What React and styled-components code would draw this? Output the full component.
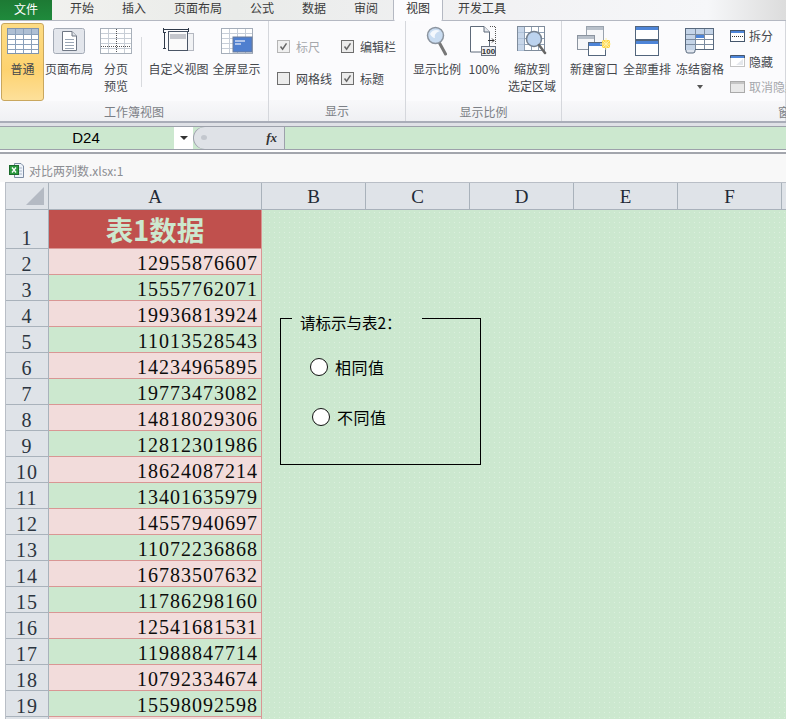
import React from 'react';
import styled, { createGlobalStyle } from 'styled-components';

const CJK = '"Noto Sans CJK SC", "Liberation Sans", sans-serif';
const SERIF = '"Liberation Serif", "Noto Sans CJK SC", serif';
const GREEN = '#cce8cf';
const DOTS = 'radial-gradient(circle, rgba(255,255,255,.32) .7px, transparent .8px)';

const GlobalStyle = createGlobalStyle`
  html, body { margin: 0; padding: 0; background: #fff; overflow: hidden; }
  body { width: 786px; height: 719px; font-family: ${CJK}; }
`;

const Page = styled.div`
  width: 786px;
  height: 719px;
  overflow: hidden;
  display: flex;
  flex-direction: column;
`;

/* tabs */
const TabBar = styled.div`
  height: 20px;
  display: flex;
  flex: none;
  background: linear-gradient(90deg, #f3f3f0 0%, #e9ebe9 30%, #f1f1f3 60%, #f6f7f9 90%, #dcdcdc 100%);
  border-bottom: 1px solid #b4b8c2;
`;
const FileTab = styled.div`
  width: 52px;
  background: linear-gradient(#1d7a34, #1f8a3c);
  color: #fff;
  font-size: 12px;
  line-height: 18px;
  text-align: center;
`;
const Tab = styled.div`
  width: ${p => p.$w}px;
  margin-left: ${p => p.$ml || 0}px;
  font-size: 12px;
  line-height: 15px;
  text-align: center;
  color: #3b3b3b;
  box-sizing: border-box;
  ${p => p.$active && `
    height: 21px;
    background: #fcfcfe;
    border-left: 1px solid #b4b8c2;
    border-right: 1px solid #b4b8c2;
    border-radius: 0 0 2px 2px;
    position: relative;
    color: #333;
  `}
`;

/* ribbon */
const Ribbon = styled.div`
  height: 100px;
  flex: none;
  display: flex;
  background: #fbfbfd;
  border-bottom: 2px solid #a9adb8;
  overflow: hidden;
`;
const Group = styled.div`
  width: ${p => p.$w}px;
  flex: none;
  display: flex;
  flex-direction: column;
  box-sizing: border-box;
  border-right: 1px solid #d5d7dc;
`;
const GroupBody = styled.div`
  height: 80px;
  display: flex;
  align-items: flex-start;
  padding-top: 2px;
  padding-left: ${p => p.$pl || 0}px;
  box-sizing: border-box;
`;
const GroupLabel = styled.div`
  flex: 1;
  font-size: 12px;
  line-height: 21px;
  text-align: ${p => p.$align || 'center'};
  padding-left: ${p => p.$pl || 0}px;
  white-space: nowrap;
  color: #7b7f86;
  background: linear-gradient(#f8f8fa, #eff0f3);
`;
const BigButton = styled.div`
  width: ${p => p.$w}px;
  margin-left: ${p => p.$ml || 0}px;
  height: 78px;
  flex: none;
  display: flex;
  flex-direction: column;
  align-items: center;
  box-sizing: border-box;
  padding-top: 3px;
  border-radius: 3px;
  ${p => p.$on && `
    background: linear-gradient(#fddc85, #fdd26f 60%, #fde09a);
    border: 1px solid #c9a75e;
    padding-top: 2px;
  `}
`;
const IconSlot = styled.div`
  height: 30px;
  display: flex;
  align-items: center;
  justify-content: center;
  svg { display: block; }
`;
const BigText = styled.div`
  margin-top: 4px;
  font-size: 12px;
  line-height: 17px;
  text-align: center;
  white-space: nowrap;
  color: #44474c;
`;
const Arrow = styled.div`
  width: 0;
  height: 0;
  margin-top: 8px;
  border: 3px solid transparent;
  border-top: 4px solid #555;
`;
const Separator = styled.div`
  width: 1px;
  height: 50px;
  margin: 14px 5px 0 3px;
  background: #d8dade;
  flex: none;
`;
const CheckGrid = styled.div`
  display: grid;
  grid-template-columns: 64px 64px;
  grid-auto-rows: 32px;
  padding-top: 7px;
`;
const CheckRow = styled.div`
  display: flex;
  align-items: center;
  gap: 6px;
  font-size: 12px;
  color: ${p => (p.$off ? '#a6a8ac' : '#44474c')};
`;
const CheckBox = styled.span`
  width: 11px;
  height: 11px;
  flex: none;
  border: 1px solid ${p => (p.$off ? '#b5b5b5' : '#6e6e6e')};
  background: ${p => (p.$off ? '#f0f0f0' : '#ececec')};
  display: flex;
  svg { display: block; }
`;
const SmallList = styled.div`
  display: flex;
  flex-direction: column;
  padding-top: 0;
  margin-left: 6px;
`;
const SmallRow = styled.div`
  height: 25.5px;
  display: flex;
  align-items: center;
  gap: 4px;
  font-size: 12px;
  white-space: nowrap;
  color: ${p => (p.$off ? '#a6a8ac' : '#44474c')};
  svg { display: block; flex: none; }
`;

/* formula bar */
const Gutter = styled.div`
  height: 3px;
  flex: none;
  background: #dfe1e6;
`;
const FormulaBar = styled.div`
  height: 22px;
  flex: none;
  display: flex;
  border-top: 1px solid #9da1ab;
  border-bottom: 1px solid #9da1ab;
  background-color: ${GREEN};
`;
const NameBox = styled.div`
  width: 174px;
  font-family: "Liberation Sans", sans-serif;
  font-size: 15px;
  line-height: 22px;
  text-align: center;
  color: #000;
  padding-right: 2px;
  box-sizing: border-box;
`;
const NameDrop = styled.div`
  width: 19px;
  background: #fff;
  display: flex;
  align-items: center;
  justify-content: center;
  &::after {
    content: '';
    margin-top: 3px;
    border: 4px solid transparent;
    border-top: 4px solid #333;
  }
`;
const FxPanel = styled.div`
  width: 92px;
  display: flex;
  align-items: center;
  justify-content: flex-end;
  padding-right: 7px;
  box-sizing: border-box;
  background: #dfe2e7;
  border-right: 1px solid #9da1ab;
  border-radius: 11px 0 0 11px;
  box-shadow: inset 1px 0 0 #9da1ab;
  font: italic bold 13px ${SERIF};
  color: #333;
  position: relative;
  &::before {
    content: '';
    position: absolute;
    left: 8px;
    top: 8px;
    width: 6px;
    height: 5px;
    border-radius: 50%;
    background: #c3c7ce;
  }
`;
const FormulaInput = styled.div`
  flex: 1;
`;
const BarGap = styled.div`
  height: 2px;
  flex: none;
  background: #fff;
  border-bottom: 2px solid #a3a6ad;
`;

/* workbook */
const TitleStrip = styled.div`
  height: 28px;
  flex: none;
  display: flex;
  align-items: flex-end;
  gap: 5px;
  padding: 0 0 4px 9px;
  box-sizing: border-box;
  font-size: 12px;
  line-height: 14px;
  color: #8b8d92;
  background: #f8f8f8;
  svg { display: block; }
`;
const SheetFrame = styled.div`
  flex: 1;
  position: relative;
  margin-left: 5px;
  border-left: 1px solid #b9bec6;
  border-top: 1px solid #b9bec6;
  overflow: hidden;
`;
const Sheet = styled.div`
  display: grid;
  grid-template-columns: 43px 213px repeat(6, 104px);
  grid-template-rows: 27px 39px repeat(19, 26px);
  background-color: ${GREEN};
`;
const Corner = styled.div`
  background: #dfe3e8;
  border-right: 1px solid #a9b2bb;
  border-bottom: 1px solid #a9b2bb;
  box-sizing: border-box;
  position: relative;
  &::after {
    content: '';
    position: absolute;
    right: 4px;
    bottom: 4px;
    border-left: 18px solid transparent;
    border-bottom: 18px solid #b4bac3;
  }
`;
const ColHead = styled.div`
  background: #dfe3e8;
  border-right: 1px solid #a9b2bb;
  border-bottom: 1px solid #a9b2bb;
  box-sizing: border-box;
  font: 19px/27px ${SERIF};
  text-align: center;
  color: #1f2a36;
`;
const RowHead = styled.div`
  background: #dfe3e8;
  border-right: 1px solid #a9b2bb;
  border-bottom: 1px solid #a9b2bb;
  box-sizing: border-box;
  font: 20px/20px ${SERIF};
  letter-spacing: 1px;
  text-align: center;
  color: #2c3540;
  display: flex;
  align-items: flex-end;
  justify-content: center;
`;
const TitleCell = styled.div`
  background: #c0504d;
  border-right: 1px solid #d99694;
  border-bottom: 1px solid #d99694;
  box-sizing: border-box;
  font: bold 27.5px/38px ${CJK};
  text-align: center;
  color: ${GREEN};
`;
const NumCell = styled.div`
  background: ${p => (p.$pink ? '#f2dcdb' : 'transparent')};
  border-right: 1px solid #d99694;
  border-bottom: 1px solid #d99694;
  box-sizing: border-box;
  font: 20px/29px ${SERIF};
  letter-spacing: 1px;
  text-align: right;
  padding-right: 3px;
  color: #0c0c0c;
`;
const Blank = styled.div`
  background-image: ${DOTS};
  background-size: 5px 5px;
`;
const BlankArea = styled(Blank)`
  grid-column: 3 / 9;
  grid-row: 2 / 22;
`;
const OptionBox = styled.fieldset`
  position: absolute;
  left: 274px;
  top: 126px;
  width: 201px;
  height: 156px;
  margin: 0;
  padding: 0;
  box-sizing: border-box;
  border: 1px solid #000;
  font-size: 16px;
  color: #000;
`;
const OptionLegend = styled.legend`
  margin-left: 11px;
  padding: 0 8px 0 8px;
  width: 130px;
  box-sizing: border-box;
  font-size: 15.5px;
  line-height: 18px;
  white-space: nowrap;
  position: relative;
  top: 4px;
`;
const Option = styled.label`
  position: absolute;
  left: ${p => p.$x}px;
  top: ${p => p.$y}px;
  display: flex;
  align-items: center;
  gap: 7px;
  line-height: 20px;
  letter-spacing: .5px;
`;
const RadioDot = styled.span`
  width: 16px;
  height: 16px;
  border: 1.5px solid #111;
  border-radius: 50%;
  background: #fff;
  flex: none;
`;

const Check = () => (
  <svg width="11" height="11" viewBox="0 0 11 11">
    <path d="M2.5 5.5 L4.6 8.2 L8.5 2.4" fill="none" stroke="#666" strokeWidth="1.5" />
  </svg>
);

const NormalIcon = () => (
  <svg width="32" height="26" viewBox="0 0 32 26">
    <rect x=".5" y=".5" width="31" height="25" fill="#fff" stroke="#7f94ad" />
    <rect x="1" y="1" width="30" height="5" fill="#aebfd4" />
    {[6, 11, 16, 21].map(y => <path key={y} d={`M1 ${y}.5H31`} stroke="#8aa0ba" />)}
    {[8, 16, 24].map(x => <path key={x} d={`M${x}.5 1V25`} stroke="#8aa0ba" />)}
  </svg>
);
const LayoutIcon = () => (
  <svg width="32" height="26" viewBox="0 0 32 26">
    <rect x=".5" y=".5" width="31" height="25" rx="2" fill="#e3e6ec" stroke="#a4abb6" />
    <path d="M9.5 3.5H19L23.5 8V22.5H9.5Z" fill="#fff" stroke="#6f7784" />
    <path d="M19 3.5V8H23.5" fill="#dfe3e8" stroke="#6f7784" />
    {[11, 14, 17, 20].map(y => <path key={y} d={`M12 ${y}.5H21`} stroke="#9aa6b5" />)}
  </svg>
);
const BreakIcon = () => (
  <svg width="32" height="26" viewBox="0 0 32 26">
    <rect x=".5" y=".5" width="31" height="25" fill="#fff" stroke="#a8b0ba" />
    {[5, 10, 15, 20].map(y => <path key={y} d={`M1 ${y}.5H31`} stroke="#c8ced6" />)}
    {[8, 24].map(x => <path key={x} d={`M${x}.5 1V25`} stroke="#c8ced6" />)}
    <path d="M16.5 1V25" stroke="#555" strokeDasharray="1 1" />
    <path d="M1 18.5H31" stroke="#555" strokeDasharray="1 1" />
  </svg>
);
const CustomIcon = () => (
  <svg width="32" height="26" viewBox="0 0 32 26">
    <rect x="13.5" y="5.5" width="17" height="17" fill="#f1f2f4" stroke="#b3b7c0" />
    <rect x="5.5" y="3.5" width="19" height="19" fill="#fafafa" stroke="#4a5566" />
    <rect x="7" y="6" width="16" height="5" fill="#c4c6cc" />
    <path d="M1 1.5H26M.5 0V4M25.5 0V4M1.5 4V21M0 4.5H3M0 20.5H3" stroke="#2f3a4a" fill="none" />
  </svg>
);
const FullIcon = () => (
  <svg width="32" height="26" viewBox="0 0 32 26">
    <rect x=".5" y=".5" width="31" height="25" fill="#fff" stroke="#a5aeba" />
    {[5, 10, 15, 20].map(y => <path key={y} d={`M1 ${y}.5H31`} stroke="#c7ced8" />)}
    {[8, 16, 24].map(x => <path key={x} d={`M${x}.5 1V25`} stroke="#c7ced8" />)}
    <rect x="12" y="9" width="19" height="15" fill="#4f7fcf" stroke="#6c7d99" />
    <path d="M14 13H24M14 16H20" stroke="#cfdcf3" strokeWidth="1.5" />
  </svg>
);
const LensIcon = () => (
  <svg width="22" height="30" viewBox="0 0 22 30">
    <path d="M13.5 17 L19.5 28" stroke="#777" strokeWidth="3" strokeLinecap="round" />
    <circle cx="9.5" cy="9.5" r="8" fill="#c9dcf1" stroke="#8b949f" strokeWidth="1.5" />
    <path d="M4 8 C6 4 10 3 14 5 C11 6 8 8 9 12 C7 12 5 10 4 8Z" fill="#f4f8fd" />
  </svg>
);
const HundredIcon = () => (
  <svg width="28" height="30" viewBox="0 0 28 30">
    <path d="M.5 .5H14L19.5 6V26H.5Z" fill="#fff" stroke="#5f6b7a" />
    <path d="M14 .5V6H19.5" fill="#e6e9ee" stroke="#5f6b7a" />
    <path d="M20 .5H25.5V18" fill="none" stroke="#555" strokeDasharray="1 1" />
    <path d="M18 14.5H24M22 12.5L24 14.5L22 16.5" fill="none" stroke="#333" />
    <rect x="11.5" y="20.5" width="14" height="9" fill="#eef0f3" stroke="#6a7280" />
    <text x="18.5" y="28" textAnchor="middle" fontSize="8" fontWeight="700" fontFamily="Liberation Sans" fill="#333">100</text>
  </svg>
);
const ZoomSelIcon = () => (
  <svg width="30" height="30" viewBox="0 0 30 30">
    <rect x=".5" y=".5" width="27" height="24" fill="#fff" stroke="#7f8c9c" />
    {[6, 12, 18].map(y => <path key={y} d={`M1 ${y}.5H27`} stroke="#8fa0b5" />)}
    {[7, 14, 21].map(x => <path key={x} d={`M${x}.5 1V24`} stroke="#8fa0b5" />)}
    <rect x="1" y="1" width="6" height="24" fill="#b9cce4" opacity=".8" />
    <circle cx="17" cy="13" r="7.5" fill="#bcd3ef" stroke="#74808f" strokeWidth="1.5" />
    <path d="M22 19L28 27" stroke="#666" strokeWidth="2.5" strokeLinecap="round" />
  </svg>
);
const NewWinIcon = () => (
  <svg width="34" height="30" viewBox="0 0 34 30">
    <rect x="9.5" y=".5" width="17" height="21" fill="#f6f7f9" stroke="#9aa3ae" />
    <rect x="10" y="1" width="16" height="3" fill="#b8c0ca" />
    <rect x=".5" y="9.5" width="17" height="14" fill="#f6f7f9" stroke="#8b94a0" />
    <rect x="1" y="10" width="16" height="3" fill="#b8c0ca" />
    <rect x="11.5" y="16.5" width="17" height="13" fill="#fff" stroke="#55677d" />
    <rect x="12" y="17" width="16" height="3" fill="#4e85d8" />
    <path d="M25 14h8v8h-8z" fill="#ffd64a" />
    <path d="M29 12v12M23 18h12M25 14l8 8M33 14l-8 8" stroke="#fff2a8" />
  </svg>
);
const ArrangeIcon = () => (
  <svg width="24" height="30" viewBox="0 0 24 30">
    <rect x=".5" y=".5" width="23" height="13" fill="#fff" stroke="#52657c" />
    <rect x="1" y="1" width="22" height="3" fill="#4e85d8" />
    <rect x=".5" y="14.5" width="23" height="15" fill="#fff" stroke="#52657c" />
    <rect x="1" y="15" width="22" height="3" fill="#4e85d8" />
  </svg>
);
const FreezeIcon = () => (
  <svg width="30" height="26" viewBox="0 0 30 26">
    <rect x=".5" y=".5" width="28" height="21" fill="#fff" stroke="#58697e" />
    <rect x="1" y="1" width="9" height="21" fill="#c4d4e8" />
    <rect x="1" y="1" width="27" height="5" fill="#c4d4e8" />
    <rect x="10" y="6" width="10" height="4" fill="#4e85d8" />
    {[6, 11, 16].map(y => <path key={y} d={`M1 ${y}.5H28`} stroke="#7c8ca0" />)}
    {[10, 19].map(x => <path key={x} d={`M${x}.5 1V21`} stroke="#7c8ca0" />)}
    <path d="M1 22v1a2 2 0 0 0 2 2h5a2 2 0 0 0 2-2v-1" fill="#dfe5ee" stroke="#58697e" />
  </svg>
);
const SplitIcon = () => (
  <svg width="15" height="12" viewBox="0 0 15 12">
    <rect x=".5" y=".5" width="14" height="11" fill="#fff" stroke="#45566c" />
    <rect x="1" y="1" width="13" height="2" fill="#4e85d8" />
    <path d="M2 6.5H13" stroke="#333" strokeDasharray="1 1" />
  </svg>
);
const HideIcon = () => (
  <svg width="15" height="12" viewBox="0 0 15 12">
    <rect x=".5" y=".5" width="14" height="11" fill="#fff" stroke="#888" strokeDasharray="1 1" />
    <path d="M.5 3V.5H14.5V3" fill="none" stroke="#45566c" />
    <rect x="1" y="1" width="13" height="2" fill="#4e85d8" />
    <path d="M6 10L13 4V10Z" fill="#e4e7ec" />
  </svg>
);
const UnhideIcon = () => (
  <svg width="15" height="12" viewBox="0 0 15 12">
    <rect x=".5" y=".5" width="14" height="11" fill="#e9e9e9" stroke="#aaa" />
    <rect x="1" y="1" width="13" height="2" fill="#c5c5c5" />
  </svg>
);
const XlsIcon = () => (
  <svg width="15" height="15" viewBox="0 0 15 15">
    <path d="M5.5 .5H12L14.5 3V14.5H5.5Z" fill="#eef3fa" stroke="#7d8da3" />
    <path d="M8 5H13M8 8H13M8 11H13" stroke="#a8b5c6" />
    <rect x=".5" y="2.5" width="9" height="9" fill="#2c9a3f" stroke="#1c6a2b" />
    <path d="M3 4.5L7 9.5M7 4.5L3 9.5" stroke="#fff" strokeWidth="1.3" />
  </svg>
);

const numbers = [
  '12955876607', '15557762071', '19936813924', '11013528543', '14234965895', '19773473082',
  '14818029306', '12812301986', '18624087214', '13401635979', '14557940697', '11072236868',
  '16783507632', '11786298160', '12541681531', '11988847714', '10792334674', '15598092598',
];

const tabs = [
  ['开始', 60], ['插入', 44], ['页面布局', 84], ['公式', 44], ['数据', 60], ['审阅', 44],
];

const BigBtn = ({ icon, w, ml, on, children, arrow }) => (
  <BigButton $w={w} $ml={ml} $on={on}>
    <IconSlot>{icon}</IconSlot>
    <BigText>{children}</BigText>
    {arrow && <Arrow />}
  </BigButton>
);

const Opt = ({ label, off, checked = true }) => (
  <CheckRow $off={off}>
    <CheckBox $off={off}>{checked && <Check />}</CheckBox>
    {label}
  </CheckRow>
);

export default function App() {
  return (
    <Page>
      <GlobalStyle />
      <TabBar>
        <FileTab>文件</FileTab>
        {tabs.map(([t, w]) => <Tab key={t} $w={w}>{t}</Tab>)}
        <Tab $w={50} $ml={5} $active>视图</Tab>
        <Tab $w={78}>开发工具</Tab>
      </TabBar>
      <Ribbon>
        <Group $w={269}>
          <GroupBody $pl={1}>
            <BigBtn on w={43} icon={<NormalIcon />}>普通</BigBtn>
            <BigBtn w={50} icon={<LayoutIcon />}>页面布局</BigBtn>
            <BigBtn w={44} icon={<BreakIcon />}>分页<br />预览</BigBtn>
            <Separator />
            <BigBtn w={63} icon={<CustomIcon />}>自定义视图</BigBtn>
            <BigBtn w={53} icon={<FullIcon />}>全屏显示</BigBtn>
          </GroupBody>
          <GroupLabel>工作簿视图</GroupLabel>
        </Group>
        <Group $w={137}>
          <GroupBody $pl={8}>
            <CheckGrid>
              <Opt off label="标尺" />
              <Opt label="编辑栏" />
              <Opt checked={false} label="网格线" />
              <Opt label="标题" />
            </CheckGrid>
          </GroupBody>
          <GroupLabel>显示</GroupLabel>
        </Group>
        <Group $w={156}>
          <GroupBody $pl={7}>
            <BigBtn w={48} icon={<LensIcon />}>显示比例</BigBtn>
            <BigBtn w={32} ml={7} icon={<HundredIcon />}>100%</BigBtn>
            <BigBtn w={50} ml={7} icon={<ZoomSelIcon />}>缩放到<br />选定区域</BigBtn>
          </GroupBody>
          <GroupLabel>显示比例</GroupLabel>
        </Group>
        <Group $w={224}>
          <GroupBody $pl={8}>
            <BigBtn w={48} icon={<NewWinIcon />}>新建窗口</BigBtn>
            <BigBtn w={48} ml={5} icon={<ArrangeIcon />}>全部重排</BigBtn>
            <BigBtn w={48} ml={5} arrow icon={<FreezeIcon />}>冻结窗格</BigBtn>
            <SmallList>
              <SmallRow><SplitIcon />拆分</SmallRow>
              <SmallRow><HideIcon />隐藏</SmallRow>
              <SmallRow $off><UnhideIcon />取消隐藏</SmallRow>
            </SmallList>
          </GroupBody>
          <GroupLabel $align="left" $pl={216}>窗口</GroupLabel>
        </Group>
      </Ribbon>
      <Gutter />
      <FormulaBar>
        <NameBox>D24</NameBox>
        <NameDrop />
        <FxPanel>fx</FxPanel>
        <FormulaInput />
      </FormulaBar>
      <BarGap />
      <TitleStrip><XlsIcon />对比两列数.xlsx:1</TitleStrip>
      <SheetFrame>
        <Sheet>
          <Corner />
          <ColHead>A</ColHead>
          {['B', 'C', 'D', 'E', 'F', ''].map(c => <ColHead key={c}>{c}</ColHead>)}
          <RowHead>1</RowHead>
          <TitleCell>表1数据</TitleCell>
          <BlankArea />
          {numbers.map((n, i) => (
            <React.Fragment key={n}>
              <RowHead>{i + 2}</RowHead>
              <NumCell $pink={i % 2 === 0}>{n}</NumCell>
            </React.Fragment>
          ))}
          <RowHead />
          <NumCell $pink />
        </Sheet>
        <OptionBox>
          <OptionLegend>请标示与表2：</OptionLegend>
          <Option $x={29} $y={30}><RadioDot />相同值</Option>
          <Option $x={31} $y={80}><RadioDot />不同值</Option>
        </OptionBox>
      </SheetFrame>
    </Page>
  );
}
